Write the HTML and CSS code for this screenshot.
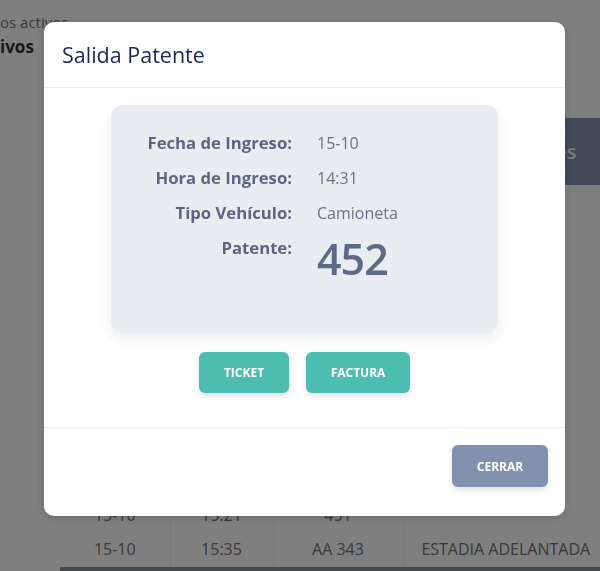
FILE: index.html
```html
<!DOCTYPE html>
<html lang="es">
<head>
  <meta charset="UTF-8" />
  <meta name="viewport" content="width=device-width, initial-scale=1.0"/>
  <title>Salida Patente</title>
  <link rel="stylesheet" href="styles.css">
</head>
<body>

  <div class="page">
    <p class="page-sub">os activos</p>
    <p class="page-title">ivos</p>

    <table class="parking">
      <thead>
        <tr>
          <th>Fecha</th>
          <th>Hora</th>
          <th>Patente</th>
          <th>Observaciones</th>
        </tr>
      </thead>
      <tbody>
        <tr><td>15-10</td><td>14:31</td><td>452</td><td></td></tr>
        <tr><td>15-10</td><td>14:40</td><td>AB 120</td><td></td></tr>
        <tr><td>15-10</td><td>14:48</td><td>JK 881</td><td></td></tr>
        <tr><td>15-10</td><td>14:52</td><td>RT 045</td><td></td></tr>
        <tr><td>15-10</td><td>14:59</td><td>MN 310</td><td></td></tr>
        <tr><td>15-10</td><td>15:03</td><td>GH 772</td><td></td></tr>
        <tr><td>15-10</td><td>15:08</td><td>CD 219</td><td></td></tr>
        <tr><td>15-10</td><td>15:14</td><td>PL 604</td><td></td></tr>
        <tr><td>15-10</td><td>15:18</td><td>ZX 902</td><td></td></tr>
        <tr><td>15-10</td><td>15:21</td><td>451</td><td></td></tr>
        <tr><td>15-10</td><td>15:35</td><td>AA 343</td><td>ESTADIA ADELANTADA</td></tr>
      </tbody>
    </table>
  </div>

  <div class="overlay">
    <div class="modal">
      <div class="modal-header">
        <h2>Salida Patente</h2>
      </div>

      <div class="modal-body">
        <div class="ticket-card">
          <span class="label">Fecha de Ingreso:</span>
          <span class="value">15-10</span>
          <span class="label">Hora de Ingreso:</span>
          <span class="value">14:31</span>
          <span class="label">Tipo Vehículo:</span>
          <span class="value">Camioneta</span>
          <span class="label">Patente:</span>
          <span class="value plate">452</span>
        </div>

        <div class="actions">
          <button class="btn btn-teal btn-ticket">Ticket</button>
          <button class="btn btn-teal btn-factura">Factura</button>
        </div>
      </div>

      <div class="modal-footer">
        <button class="btn btn-gray">Cerrar</button>
      </div>
    </div>
  </div>

</body>
</html>
```

FILE: styles.css
```css
body {
  margin: 0;
  background: #ffffff;
  font-family: "Open Sans", "DejaVu Sans", sans-serif;
  overflow: hidden;
  height: 571px;
}

.page {
  padding-top: 12px;
}

.page-sub {
  margin: 0;
  font-size: 15px;
  line-height: 20px;
  color: #757575;
}

.page-title {
  margin: 3px 0 0;
  font-size: 17px;
  font-weight: 700;
  line-height: 24px;
  color: #333333;
}

.parking {
  margin: 59px 0 0 60px;
  width: 548px;
  border-collapse: collapse;
  table-layout: fixed;
  border-bottom: 4px solid #86949e;
}

.parking th {
  height: 67px;
  background: #8694ae;
  color: #f2f4f8;
  font-size: 20px;
  font-weight: 600;
  padding: 0;
}

.parking th:nth-child(1), .parking td:nth-child(1) { width: 110px; }
.parking th:nth-child(2), .parking td:nth-child(2) { width: 103px; }
.parking th:nth-child(3), .parking td:nth-child(3) { width: 130px; }
.parking th:nth-child(4), .parking td:nth-child(4) { width: 205px; }

.parking td {
  height: 34.7px;
  padding: 0;
  text-align: center;
  font-size: 16px;
  color: #727272;
  border-right: 1px solid #f0f0f0;
  white-space: nowrap;
}

.parking td:last-child {
  border-right: none;
}

.overlay {
  position: fixed;
  inset: 0;
  background: rgba(0, 0, 0, 0.5);
  display: flex;
  align-items: flex-start;
  padding: 22px 0 0 44px;
}

.modal {
  width: 521px;
  background: #ffffff;
  border-radius: 10px;
  box-shadow: 0 2px 10px rgba(0, 0, 0, 0.15);
}

.modal-header {
  height: 65px;
  display: flex;
  align-items: center;
  padding: 0 18px;
  border-bottom: 1px solid #eceef1;
}

.modal-header h2 {
  margin: 0;
  font-size: 21.5px;
  font-weight: 500;
  color: #1b2657;
}

.modal-body {
  padding: 17px 0 34px;
}

.ticket-card {
  width: 387px;
  margin: 0 auto;
  box-sizing: border-box;
  height: 228px;
  padding-top: 26px;
  background: #e9ecf0;
  border-radius: 12px;
  box-shadow: 0 6px 14px rgba(0, 0, 0, 0.07);
  display: grid;
  grid-template-columns: 181px 1fr;
  column-gap: 25px;
  row-gap: 11px;
  align-content: start;
  align-items: start;
}

.label {
  text-align: right;
  font-size: 16.7px;
  font-weight: 700;
  line-height: 24px;
  color: #5b6782;
}

.value {
  font-size: 16px;
  line-height: 24px;
  color: #6c7384;
}

.value.plate {
  font-size: 43px;
  line-height: 45px;
  font-weight: 600;
  letter-spacing: -1px;
  color: #5c6a86;
}

.actions {
  margin-top: 19px;
  display: flex;
  justify-content: center;
  gap: 17px;
}

.btn {
  border: none;
  border-radius: 6px;
  color: #ffffff;
  font-family: inherit;
  font-size: 12px;
  font-weight: 700;
  text-transform: uppercase;
  cursor: pointer;
  box-shadow: 0 3px 6px rgba(0, 0, 0, 0.12);
}

.btn-teal {
  background: #4dbdb1;
  height: 41px;
}

.btn-ticket { width: 90px; }
.btn-factura { width: 104px; }

.btn-gray {
  background: #8292ae;
  width: 96px;
  height: 42px;
}

.modal-footer {
  border-top: 1px solid #eceef1;
  padding: 17px 17px 29px;
  display: flex;
  justify-content: flex-end;
}
```
